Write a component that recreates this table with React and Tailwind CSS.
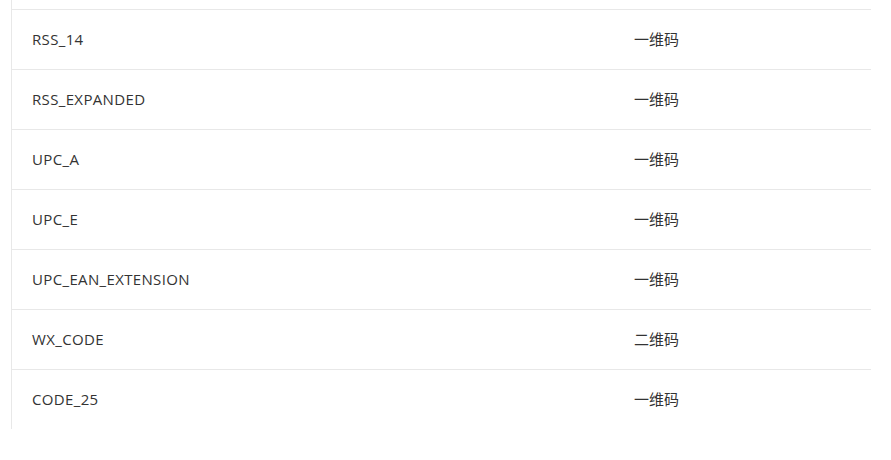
export default function App() {
  const rows = [
    ["RSS_14", "一维码"],
    ["RSS_EXPANDED", "一维码"],
    ["UPC_A", "一维码"],
    ["UPC_E", "一维码"],
    ["UPC_EAN_EXTENSION", "一维码"],
    ["WX_CODE", "二维码"],
    ["CODE_25", "一维码"],
  ];
  return (
    <div
      className="w-[891px] h-[460px] bg-white pl-[11px] text-[15px] text-[#333]"
      style={{ fontFamily: '"Open Sans", "Noto Sans CJK SC", sans-serif' }}
    >
      <div className="w-[860px] border-l border-[#e8e8e8]">
        <div className="h-[10px] border-b border-[#e8e8e8]" />
        {rows.map(([a, b], i) => (
          <div
            key={a}
            className={
              i < rows.length - 1
                ? "grid grid-cols-[602px_1fr] items-center h-[60px] border-b border-[#e8e8e8]"
                : "grid grid-cols-[602px_1fr] items-center h-[59px]"
            }
          >
            <div className="px-5 tracking-[0.35px]">{a}</div>
            <div className="px-5">{b}</div>
          </div>
        ))}
      </div>
    </div>
  );
}
